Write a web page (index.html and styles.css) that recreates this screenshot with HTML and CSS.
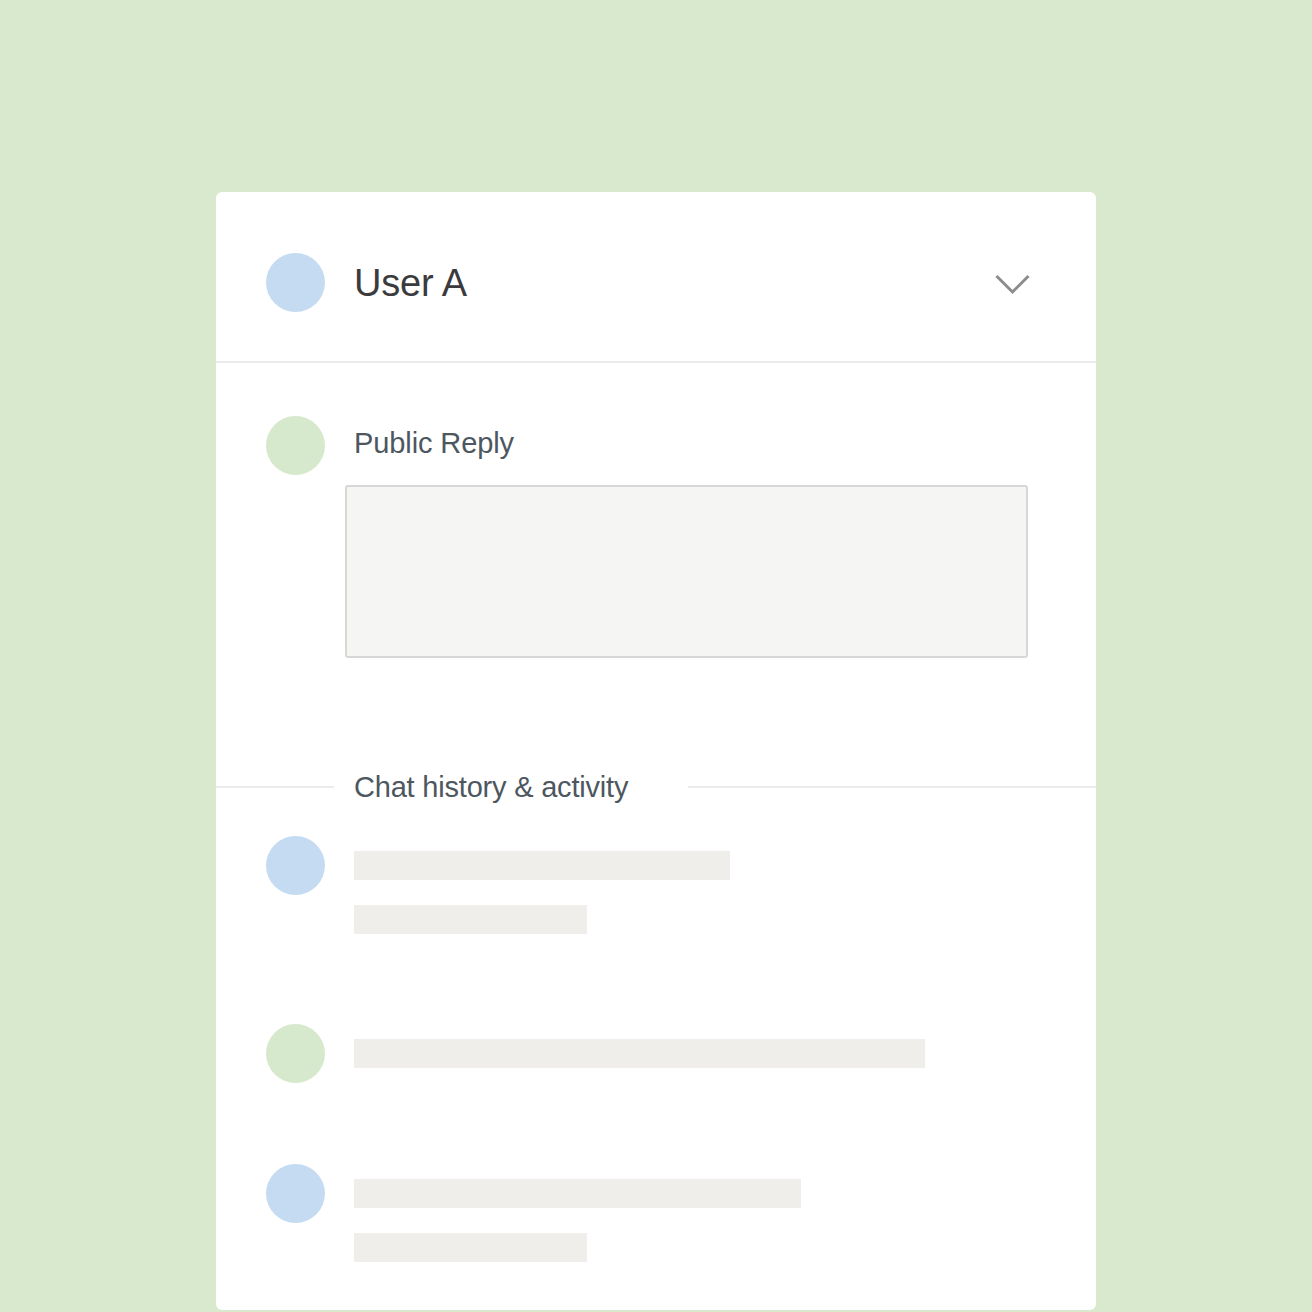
FILE: index.html
```html
<!DOCTYPE html>
<html lang="en">
<head>
    <meta charset="UTF-8">
    <title>Ticket</title>
    <link rel="stylesheet" href="styles.css">
</head>
<body>
    <div class="card">
        <div class="card-header">
            <div class="avatar avatar-blue"></div>
            <div class="user-name">User A</div>
            <svg class="chevron" width="35" height="21" viewBox="0 0 35 21">
                <path d="M1.5 2 L17.5 18 L33.5 2" fill="none" stroke="#8c8c8c" stroke-width="3"/>
            </svg>
        </div>

        <div class="reply">
            <div class="reply-head">
                <div class="avatar avatar-green"></div>
                <div class="reply-label">Public Reply</div>
            </div>
            <div class="reply-box"></div>
        </div>

        <div class="section-title">
            <span>Chat history &amp; activity</span>
        </div>

        <div class="activity">
            <div class="activity-row">
                <div class="avatar avatar-blue"></div>
                <div class="lines">
                    <div class="line" style="width: 376px"></div>
                    <div class="line" style="width: 233px"></div>
                </div>
            </div>
            <div class="activity-row">
                <div class="avatar avatar-green"></div>
                <div class="lines">
                    <div class="line" style="width: 571px"></div>
                </div>
            </div>
            <div class="activity-row row-tight">
                <div class="avatar avatar-blue"></div>
                <div class="lines">
                    <div class="line" style="width: 447px"></div>
                    <div class="line" style="width: 233px"></div>
                </div>
            </div>
        </div>
    </div>
</body>
</html>
```

FILE: styles.css
```css
body {
    margin: 0;
    padding: 0;
    background-color: #d9e9cd;
    font-family: 'Liberation Sans', Arial, sans-serif;
    overflow: hidden;
}

.card {
    width: 880px;
    height: 1118px;
    margin: 192px 0 0 216px;
    background-color: white;
    border-radius: 6px;
    box-sizing: border-box;
}

.avatar {
    width: 59px;
    height: 59px;
    border-radius: 50%;
    flex-shrink: 0;
}

.avatar-blue {
    background-color: #c5dbf1;
}

.avatar-green {
    background-color: #d6e9cc;
}

.card-header {
    display: flex;
    align-items: center;
    gap: 29px;
    padding: 61px 66px 49px 50px;
    border-bottom: 2px solid #ebebed;
}

.user-name {
    flex: 1;
    font-size: 38px;
    letter-spacing: -0.2px;
    color: #3b3b3d;
    margin-top: 2px;
}

.chevron {
    display: block;
    margin-top: 3px;
}

.reply {
    padding: 53px 68px 0 50px;
}

.reply-head {
    display: flex;
    align-items: center;
    gap: 29px;
}

.reply-label {
    font-size: 29px;
    letter-spacing: -0.1px;
    color: #4d5760;
    margin-top: -4px;
}

.reply-box {
    height: 169px;
    margin: 10px 0 0 79px;
    background-color: #f5f5f3;
    border: 2px solid #d7d7d5;
    border-radius: 3px;
}

.section-title {
    display: flex;
    align-items: center;
    margin-top: 112px;
    height: 34px;
    font-size: 29px;
    letter-spacing: -0.2px;
    color: #4d5760;
}

.section-title::before,
.section-title::after {
    content: "";
    height: 2px;
    background-color: #ebebed;
}

.section-title::before {
    width: 118px;
    margin-right: 20px;
}

.section-title::after {
    flex: 1;
    margin-left: 60px;
}

.activity {
    display: flex;
    flex-direction: column;
    gap: 90px;
    padding: 32px 50px 0 50px;
}

.activity-row {
    display: flex;
    align-items: flex-start;
    gap: 29px;
}

.row-tight {
    margin-top: -9px;
}

.lines {
    display: flex;
    flex-direction: column;
    gap: 25px;
    padding-top: 15px;
}

.line {
    height: 29px;
    background-color: #efeeea;
}
```
